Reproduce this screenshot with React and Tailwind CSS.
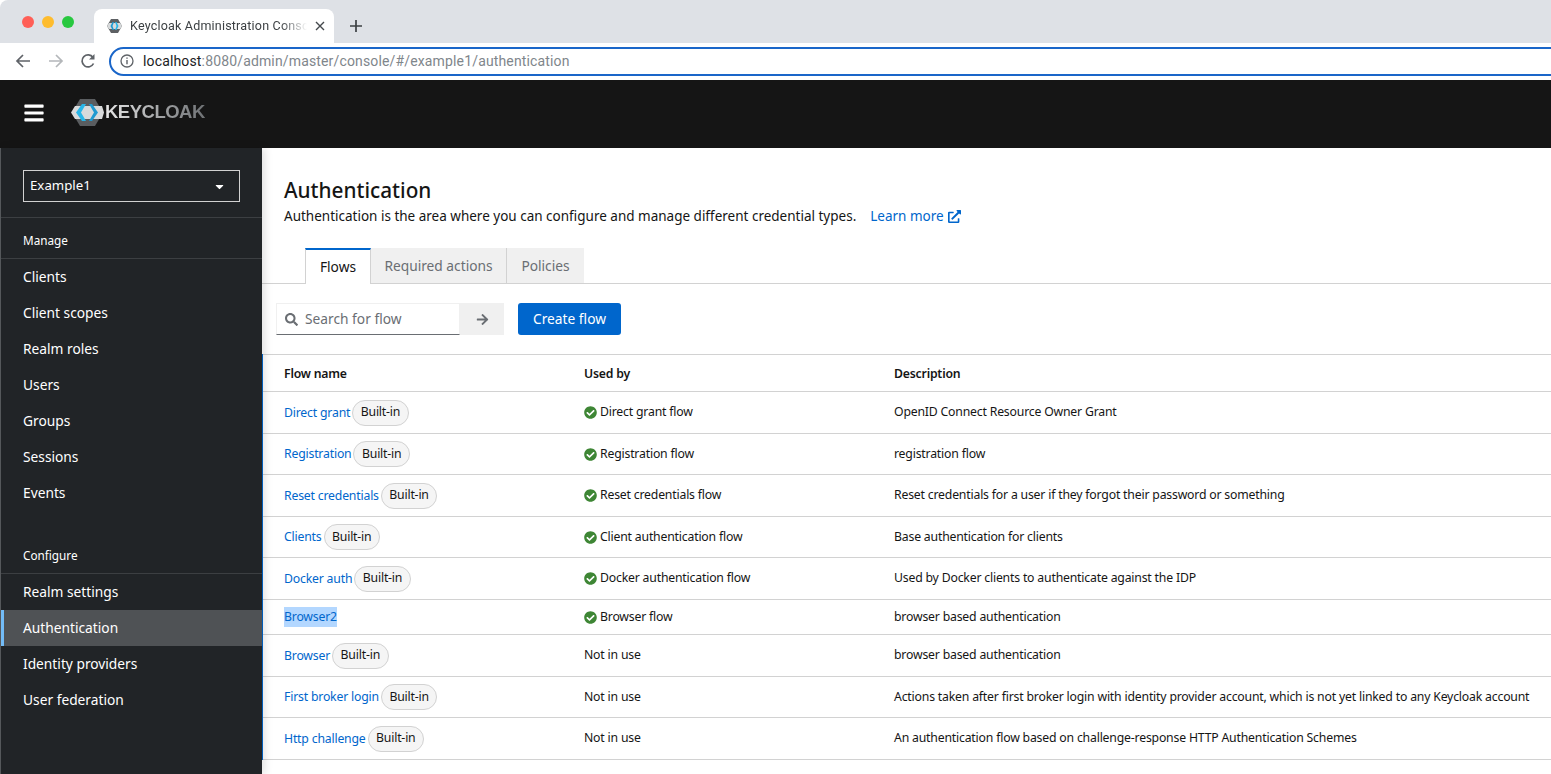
import React from "react";
import { FaBars, FaCheckCircle, FaSearch, FaArrowRight, FaExternalLinkAlt, FaCaretDown } from "react-icons/fa";

const manage = ["Clients", "Client scopes", "Realm roles", "Users", "Groups", "Sessions", "Events"];
const configure = ["Realm settings", "Authentication", "Identity providers", "User federation"];

const rows = [
  { name: "Direct grant", builtIn: true, used: "Direct grant flow", desc: "OpenID Connect Resource Owner Grant", h: "h-[42px]" },
  { name: "Registration", builtIn: true, used: "Registration flow", desc: "registration flow", h: "h-[41px]" },
  { name: "Reset credentials", builtIn: true, used: "Reset credentials flow", desc: "Reset credentials for a user if they forgot their password or something", h: "h-[42px]" },
  { name: "Clients", builtIn: true, used: "Client authentication flow", desc: "Base authentication for clients", h: "h-[41px]" },
  { name: "Docker auth", builtIn: true, used: "Docker authentication flow", desc: "Used by Docker clients to authenticate against the IDP", h: "h-[42px]" },
  { name: "Browser2", selected: true, used: "Browser flow", desc: "browser based authentication", h: "h-[35px]" },
  { name: "Browser", builtIn: true, desc: "browser based authentication", h: "h-[42px]" },
  { name: "First broker login", builtIn: true, desc: "Actions taken after first broker login with identity provider account, which is not yet linked to any Keycloak account", h: "h-[41px]" },
  { name: "Http challenge", builtIn: true, desc: "An authentication flow based on challenge-response HTTP Authentication Schemes", h: "h-[42px]" },
];

function Logo() {
  return (
    <div className="flex items-center mb-[1px]">
      <svg width="35" height="27" viewBox="0 0 35 27" className="shrink-0">
        <path d="M10 0H25L33 13.500 25 27H10L2 13.500z" fill="#5a5d60" />
        <path d="M1 13.500L5 7H32L34 13.500 32 20H5z" fill="#d8dadb" />
        <path d="M12 5L6 13.500 12 22H16L11 13.500 16 5z" fill="#29b6e8" />
        <path d="M19 5L24 13.500 19 22H22L28 13.500 22 5z" fill="#1f9ad1" />
      </svg>
      <span className="text-[18.500px] leading-none font-bold tracking-[-0.5px] font-['Liberation_Sans',sans-serif] bg-gradient-to-r from-[#e8e8e8] to-[#6f7275] bg-clip-text text-transparent">KEYCLOAK</span>
    </div>
  );
}

function Favicon() {
  return (
    <svg width="15" height="14" viewBox="0 0 15 14" className="shrink-0">
      <path d="M4 0h7l4 7-4 7H4L0 7z" fill="#5d6063" />
      <path d="M0 7l2-3h11l2 3-2 3H2z" fill="#d8dadb" />
      <path d="M5.500 3L3.500 7l2 4h1.500L5.500 7 7 3z" fill="#1f9ad1" />
      <path d="M8 3l1.500 4L8 11h1.500l2-4-2-4z" fill="#29b6e8" />
    </svg>
  );
}

function BrowserChrome() {
  return (
    <div className="shrink-0 font-['Roboto',sans-serif]">
      <div className="h-[43px] bg-[#dee1e6] rounded-tl-lg flex items-end">
        <div className="flex items-center gap-2 h-full w-[94px] pl-[22px] pt-[1px]">
          <span className="w-3 h-3 rounded-full bg-[#ff5f57]" />
          <span className="w-3 h-3 rounded-full bg-[#febc2e]" />
          <span className="w-3 h-3 rounded-full bg-[#28c840]" />
        </div>
        <div className="h-[34px] w-[240px] bg-white rounded-t-lg flex items-center pl-[13px] pr-[9px]">
          <Favicon />
          <span className="ml-[8px] w-[177px] overflow-hidden whitespace-nowrap text-[12.500px] text-[#3c4043] tracking-[0.2px] [mask-image:linear-gradient(to_right,black_85%,transparent)]">Keycloak Administration Console</span>
          <svg width="10" height="10" viewBox="0 0 10 10" className="ml-[8px] shrink-0"><path d="M1 1l8 8M9 1l-8 8" stroke="#45494d" strokeWidth="1.400" /></svg>
        </div>
        <svg width="14" height="14" viewBox="0 0 14 14" className="ml-[15px] mb-[10px]"><path d="M7 1v12M1 7h12" stroke="#3c4043" strokeWidth="1.700" /></svg>
      </div>
      <div className="h-[37px] bg-white flex items-center pl-[15px] pb-[1px]">
        <svg width="16" height="16" viewBox="0 0 16 16" className="shrink-0"><path d="M15 8H2M8 2L2 8l6 6" fill="none" stroke="#5f6368" strokeWidth="1.700" /></svg>
        <svg width="16" height="16" viewBox="0 0 16 16" className="ml-[17px] shrink-0"><path d="M1 8h13M8 2l6 6-6 6" fill="none" stroke="#b4b7ba" strokeWidth="1.700" /></svg>
        <svg width="16" height="16" viewBox="0 0 16 16" className="ml-[16px] shrink-0"><path d="M13.500 10.500A6 6 0 1 1 13 4.500" fill="none" stroke="#5f6368" strokeWidth="1.700" /><path d="M14.500 1v5.500H9z" fill="#5f6368" /></svg>
        <div className="ml-[13px] h-[29px] w-[1500px] shrink-0 border-2 border-[#1a66c9] rounded-full flex items-center pl-[9px]">
          <svg width="14" height="14" viewBox="0 0 14 14" className="shrink-0"><circle cx="7" cy="7" r="6" fill="none" stroke="#5f6368" strokeWidth="1.300" /><path d="M7 6v4.200M7 3.400v1.400" stroke="#5f6368" strokeWidth="1.400" /></svg>
          <span className="ml-[9px] text-[14px] tracking-[0.15px] text-[#80868b] whitespace-nowrap"><span className="text-[#202124]">localhost</span>:8080/admin/master/console/#/example1/authentication</span>
        </div>
      </div>
    </div>
  );
}

function NavItem({ label, active }) {
  return (
    <div className={`h-9 flex items-center text-[13.750px] text-white ${active ? "bg-[#4f5255] border-l-[3px] border-[#73bcf7] pl-[19px]" : "pl-[22px]"}`}>{label}</div>
  );
}

function Sidebar() {
  return (
    <aside className="w-[262px] shrink-0 bg-[#212427] text-white relative z-10 shadow-[3px_0_8px_rgba(0,0,0,0.12)] border-l border-[#55585b]">
      <div className="h-[70px] border-b border-[#3c3f42] pt-[22px] pl-[22px]">
        <div className="w-[217px] h-8 border border-[#d2d2d2] flex items-center justify-between pl-[6px] pr-[13px] text-[13.250px]">
          <span>Example1</span>
          <FaCaretDown className="text-white text-[13px]" />
        </div>
      </div>
      <div className="h-[41px] border-b border-[#3c3f42] flex items-center pt-[6px] pl-[22px] text-[11.750px]">Manage</div>
      <nav>{manage.map((m) => <NavItem key={m} label={m} />)}</nav>
      <div className="h-[63px] border-b border-[#3c3f42] flex items-end pb-[8px] pl-[22px] text-[11.750px]">Configure</div>
      <nav>{configure.map((m) => <NavItem key={m} label={m} active={m === "Authentication"} />)}</nav>
    </aside>
  );
}

function Pill() {
  return <span className="ml-[2px] h-[26px] px-[7.500px] inline-flex items-center rounded-full border border-[#d2d2d2] bg-[#f5f5f5] text-[#151515] shrink-0">Built-in</span>;
}

function Row({ row }) {
  return (
    <div className={`grid grid-cols-[321px_310px_1fr] items-center border-b border-[#d2d2d2] text-[12.250px] tracking-[-0.19px] text-[#151515] ${row.h}`}>
      <div className="pl-[21px] flex items-center">
        {row.selected
          ? <a className="text-[#0066cc] bg-[#b3d7ff] py-[1px]">{row.name}</a>
          : <a className="text-[#0066cc] pt-[1px]">{row.name}</a>}
        {row.builtIn && <Pill />}
      </div>
      <div className="flex items-center">
        {row.used
          ? <><FaCheckCircle className="text-[#3e8635] text-[13px] mr-[3px]" />{row.used}</>
          : "Not in use"}
      </div>
      <div className="whitespace-nowrap">{row.desc}</div>
    </div>
  );
}

export default function App() {
  return (
    <div className="h-[774px] w-full overflow-hidden bg-white flex flex-col font-['Noto_Sans',sans-serif]">
      <BrowserChrome />
      <header className="h-[68px] shrink-0 bg-[#151515] flex items-center pl-[23px] pb-[2px]">
        <FaBars className="text-white text-[22px] mr-[25px]" />
        <Logo />
      </header>
      <div className="flex flex-1 min-h-0">
        <Sidebar />
        <main className="flex-1 min-w-0">
          <section className="pt-[28px] pl-[22px] h-[100px]">
            <h1 className="text-[20.750px] leading-[28px] font-medium text-[#151515]">Authentication</h1>
            <p className="text-[13.500px] leading-[24px] text-[#151515] flex items-center">
              Authentication is the area where you can configure and manage different credential types.
              <a className="ml-[14px] text-[#0066cc] flex items-center">Learn more<FaExternalLinkAlt className="ml-[4px] text-[13px]" /></a>
            </p>
          </section>
          <div className="h-9 border-b border-[#d2d2d2] flex pl-[43px] text-[13.750px]">
            <div className="w-[66px] h-9 bg-white border-t-2 border-t-[#0066cc] border-x border-x-[#d2d2d2] -mb-px flex items-center justify-center text-[#151515]">Flows</div>
            <div className="w-[136px] pt-[2px] bg-[#f0f0f0] border-r border-[#d2d2d2] flex items-center justify-center text-[#6a6e73]">Required actions</div>
            <div className="w-[77px] pt-[2px] bg-[#f0f0f0] flex items-center justify-center text-[#6a6e73]">Policies</div>
          </div>
          <div className="h-[70px] flex items-start pt-[19px] pl-[14px]">
            <div className="w-[184px] h-8 border border-[#f0f0f0] border-b-[#6a6e73] flex items-center pl-[8px] text-[13.750px] text-[#6a6e73]">
              <FaSearch className="text-[13px] text-[#6a6e73] mr-[7px]" />Search for flow
            </div>
            <div className="w-[44px] h-8 bg-[#f0f0f0] flex items-center justify-center">
              <FaArrowRight className="text-[13px] text-[#6a6e73]" />
            </div>
            <button className="ml-[14px] w-[103px] h-8 rounded-[3px] bg-[#0066cc] text-white text-[13.750px]">Create flow</button>
          </div>
          <div className="border-l border-[#0066cc]">
            <div className="grid grid-cols-[321px_310px_1fr] items-center h-[38px] pt-[3px] border-y border-[#d2d2d2] text-[12.250px] tracking-[-0.2px] font-semibold text-[#151515]">
              <div className="pl-[21px]">Flow name</div>
              <div>Used by</div>
              <div>Description</div>
            </div>
            {rows.map((r) => <Row key={r.name} row={r} />)}
          </div>
        </main>
      </div>
    </div>
  );
}
